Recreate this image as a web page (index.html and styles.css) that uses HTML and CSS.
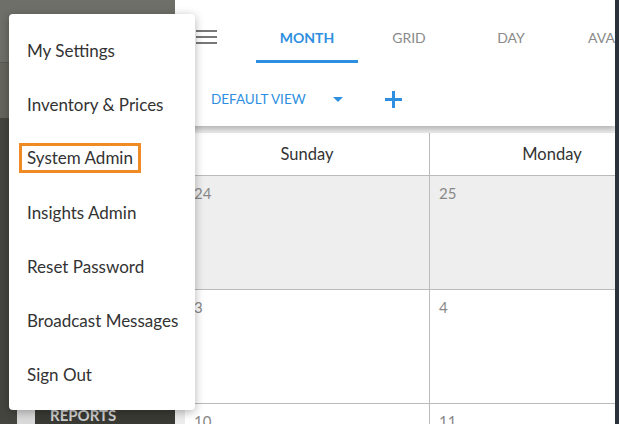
FILE: index.html
```html
<!DOCTYPE html>
<html lang="en">
<head>
    <meta charset="UTF-8">
    <meta name="viewport" content="width=device-width, initial-scale=1.0">
    <title>Calendar</title>
    <link rel="stylesheet" href="styles.css">
</head>
<body>

    <!-- Sidebar (behind the menu) -->
    <aside class="sidebar">
        <div class="sb-top"></div>
        <div class="sb-mid"></div>
        <div class="sb-rest">
            <div class="sb-item">
                <span class="sb-mark"></span>
                <span class="sb-label">REPORTS</span>
            </div>
        </div>
    </aside>

    <!-- Main calendar area -->
    <main class="main">
        <div class="toolbar">
            <div class="tab-row">
                <div class="hamburger">
                    <span></span><span></span><span></span>
                </div>
                <div class="tabs">
                    <div class="tab tab-active">MONTH</div>
                    <div class="tab">GRID</div>
                    <div class="tab">DAY</div>
                    <div class="tab tab-wide">AVAILABILITY</div>
                </div>
            </div>
            <div class="view-row">
                <span class="view-name">DEFAULT VIEW</span>
                <span class="caret"></span>
                <svg class="plus" width="19" height="19" viewBox="0 0 19 19">
                    <path d="M9.5 1 V18 M1 9.5 H18" stroke="#2e8fe0" stroke-width="3" fill="none"/>
                </svg>
            </div>
        </div>

        <div class="calendar">
            <div class="cal-head">Sunday</div>
            <div class="cal-head">Monday</div>

            <div class="cal-cell past">24</div>
            <div class="cal-cell past">25</div>

            <div class="cal-cell">3</div>
            <div class="cal-cell">4</div>

            <div class="cal-cell">10</div>
            <div class="cal-cell">11</div>
        </div>
    </main>

    <div class="edge"></div>

    <!-- User menu -->
    <div class="user-menu">
        <div class="menu-item">My Settings</div>
        <div class="menu-item">Inventory &amp; Prices</div>
        <div class="menu-item"><span class="highlight">System Admin</span></div>
        <div class="menu-item">Insights Admin</div>
        <div class="menu-item">Reset Password</div>
        <div class="menu-item">Broadcast Messages</div>
        <div class="menu-item">Sign Out</div>
    </div>

</body>
</html>
```

FILE: styles.css
```css
/* General page styles */
body, html {
    margin: 0;
    padding: 0;
    height: 424px;
    overflow: hidden;
    font-family: 'Lato', sans-serif;
}

body {
    display: flex;
}

/* Sidebar */
.sidebar {
    width: 175px;
    display: flex;
    flex-direction: column;
    flex-shrink: 0;
}

.sb-top {
    height: 62px;
    background-color: #6f6f69;
    border-bottom: 1px solid #5a5a54;
}

.sb-mid {
    height: 55px;
    background-color: #65655e;
}

.sb-rest {
    flex: 1;
    background-color: #45453f;
    display: flex;
    flex-direction: column;
}

.sb-item {
    margin-top: auto;
    height: 23px;
    display: flex;
    padding-left: 17px;
}

.sb-mark {
    width: 18px;
    background-color: #d9d9d9;
}

.sb-label {
    flex: 1;
    background-color: #3a3a35;
    color: #cfcfcf;
    font-weight: bold;
    font-size: 15px;
    padding: 5px 0 0 15px;
}

/* Main area */
.main {
    flex: 1;
    background-color: #ececec;
    display: flex;
    flex-direction: column;
    overflow: hidden;
}

.toolbar {
    background-color: white;
    height: 126px;
    flex-shrink: 0;
    box-shadow: 0 3px 6px rgba(0, 0, 0, 0.25);
    position: relative;
    z-index: 1;
}

.tab-row {
    height: 63px;
    display: flex;
}

.hamburger {
    width: 21px;
    flex-shrink: 0;
    margin: 30px 39px 0 21px;
}

.hamburger span {
    display: block;
    height: 2px;
    background-color: #777;
    margin-bottom: 4px;
}

.tabs {
    display: flex;
}

.tab {
    width: 102px;
    flex-shrink: 0;
    height: 63px;
    box-sizing: border-box;
    padding-top: 14px;
    border-bottom: 3px solid transparent;
    display: flex;
    justify-content: center;
    align-items: center;
    font-size: 14px;
    color: #8a8a8a;
    white-space: nowrap;
}

.tab-wide {
    width: auto;
    padding-left: 26px;
    padding-right: 26px;
}

.tab-active {
    color: #2e8fe0;
    font-weight: bold;
    border-bottom-color: #2e8fe0;
}

.view-row {
    height: 63px;
    box-sizing: border-box;
    padding: 9px 0 0 36px;
    display: flex;
    align-items: center;
}

.view-name {
    color: #2e8fe0;
    font-size: 13.5px;
}

.caret {
    width: 0;
    height: 0;
    border-left: 5.5px solid transparent;
    border-right: 5.5px solid transparent;
    border-top: 5px solid #2e8fe0;
    margin-left: 27px;
}

.plus {
    margin-left: 41px;
}

/* Calendar grid */
.calendar {
    margin: 7px 0 0 10px;
    display: grid;
    grid-template-columns: 245px 245px;
    grid-template-rows: 43px 114px 114px 114px;
    background-color: white;
}

.cal-head {
    display: flex;
    justify-content: center;
    align-items: center;
    font-size: 16.5px;
    color: #333;
    border-bottom: 1px solid #bbb;
    border-right: 1px solid #bbb;
}

.cal-cell {
    border-bottom: 1px solid #bbb;
    border-right: 1px solid #bbb;
    color: #888;
    font-size: 15px;
    padding: 8px 0 0 9px;
}

.cal-cell.past {
    background-color: #eeeeee;
}

/* Right edge */
.edge {
    width: 4px;
    flex-shrink: 0;
    background-color: #2b323c;
}

/* User menu overlay */
.user-menu {
    position: absolute;
    top: 14px;
    left: 9px;
    width: 186px;
    padding: 9px 0;
    background-color: white;
    border-radius: 4px;
    box-shadow: 0 2px 10px rgba(0, 0, 0, 0.3);
    z-index: 2;
}

.menu-item {
    height: 54px;
    display: flex;
    align-items: center;
    padding-left: 18px;
    font-size: 17px;
    color: #333;
}

.highlight {
    border: 3px solid #ef8a25;
    padding: 1px 5px 2px 5px;
    margin-left: -8px;
}
```
